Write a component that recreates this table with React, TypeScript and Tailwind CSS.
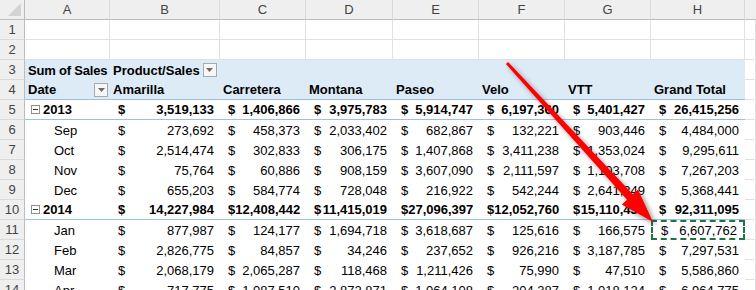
import React from "react";

const cols = ["A", "B", "C", "D", "E", "F", "G", "H"];
const heads = ["Amarilla", "Carretera", "Montana", "Paseo", "Velo", "VTT", "Grand Total"];

type Row = { label: string; year?: boolean; values: string[] };

const rows: Row[] = [
  { label: "2013", year: true, values: ["3,519,133", "1,406,866", "3,975,783", "5,914,747", "6,197,360", "5,401,427", "26,415,256"] },
  { label: "Sep", values: ["273,692", "458,373", "2,033,402", "682,867", "132,221", "903,446", "4,484,000"] },
  { label: "Oct", values: ["2,514,474", "302,833", "306,175", "1,407,868", "3,411,238", "1,353,024", "9,295,611"] },
  { label: "Nov", values: ["75,764", "60,886", "908,159", "3,607,090", "2,111,597", "1,103,708", "7,267,203"] },
  { label: "Dec", values: ["655,203", "584,774", "728,048", "216,922", "542,244", "2,641,249", "5,368,441"] },
  { label: "2014", year: true, values: ["14,227,984", "12,408,442", "11,415,019", "27,096,397", "12,052,760", "15,110,436", "92,311,095"] },
  { label: "Jan", values: ["877,987", "124,177", "1,694,718", "3,618,687", "125,616", "166,575", "6,607,762"] },
  { label: "Feb", values: ["2,826,775", "84,857", "34,246", "237,652", "926,216", "3,187,785", "7,297,531"] },
  { label: "Mar", values: ["2,068,179", "2,065,287", "118,468", "1,211,426", "75,990", "47,510", "5,586,860"] },
  { label: "Apr", values: ["717,775", "1,087,510", "2,872,871", "1,064,108", "204,387", "1,018,124", "6,964,775"] },
];

function RowNum({ n }: { n: number }) {
  return (
    <div className="flex items-center justify-center bg-[#efefef] border-b border-b-[#dadada] border-r border-r-[#bcbcbc] text-[#444]">
      {n}
    </div>
  );
}

// plain gridline cell (rows 1-2, and column I)
function Grid() {
  return <div className="bg-white border-b border-r border-[#e1e1e1]" />;
}

function FilterBtn() {
  return (
    <span className="w-[14px] h-[14px] border border-[#a9a9a9] bg-[#f7f7f7] flex items-center justify-center">
      <svg width="7" height="4" viewBox="0 0 7 4">
        <path d="M0 0H7L3.5 4Z" fill="#6b6b6b" />
      </svg>
    </span>
  );
}

function Collapse() {
  return (
    <span className="w-[9px] h-[9px] border border-[#8f8f8f] bg-white flex items-center justify-center mr-[3px]">
      <span className="w-[5px] h-px bg-[#333]" />
    </span>
  );
}

export default function App() {
  return (
    <div
      className="relative w-[756px] h-[290px] overflow-hidden bg-white text-[13px] text-black"
      style={{ fontFamily: '"Liberation Sans", Arial, sans-serif' }}
    >
      <div className="grid grid-cols-[25px_85px_110px_86px_87px_86px_86px_86px_94px_11px] auto-rows-[20px] leading-none">
        {/* column header */}
        <div className="bg-[#efefef] border-b border-r border-[#bcbcbc] flex items-end justify-end p-[3px]">
          <svg width="13" height="13" viewBox="0 0 13 13">
            <path d="M13 0V13H0Z" fill="#d3d3d3" />
          </svg>
        </div>
        {cols.map((c) => (
          <div key={c} className="bg-[#efefef] border-b border-b-[#bcbcbc] border-r border-r-[#dadada] flex items-center justify-center text-[#444]">
            {c}
          </div>
        ))}
        <div className="bg-[#efefef] border-b border-b-[#bcbcbc]" />

        {/* rows 1-2 */}
        {[1, 2].map((n) => (
          <React.Fragment key={n}>
            <RowNum n={n} />
            {cols.map((c) => <Grid key={c} />)}
            <Grid />
          </React.Fragment>
        ))}

        {/* row 3 */}
        <RowNum n={3} />
        <div className="bg-[#ddebf7] flex items-center pl-[3px] font-bold whitespace-nowrap tracking-[-0.2px]">Sum of Sales</div>
        <div className="bg-[#ddebf7] flex items-center pl-[3px] font-bold whitespace-nowrap gap-[3px]">
          Product/Sales <FilterBtn />
        </div>
        {heads.slice(1).map((h) => <div key={h} className="bg-[#ddebf7]" />)}
        <Grid />

        {/* row 4 */}
        <RowNum n={4} />
        <div className="bg-[#ddebf7] border-b border-[#9bc2e6] flex items-center justify-between pl-[3px] pr-[2px] font-bold">
          Date <FilterBtn />
        </div>
        {heads.map((h) => (
          <div key={h} className="bg-[#ddebf7] border-b border-[#9bc2e6] flex items-center pl-[3px] font-bold whitespace-nowrap">
            {h}
          </div>
        ))}
        <Grid />

        {/* pivot body */}
        {rows.map((r, i) => {
          const line = r.year ? "border-b border-[#9bc2e6]" : "";
          return (
            <React.Fragment key={r.label}>
              <RowNum n={i + 5} />
              <div className={`flex items-center ${line} ${r.year ? "pl-[6px] font-bold" : "pl-[29px]"}`}>
                {r.year && <Collapse />}
                {r.label}
              </div>
              {r.values.map((v, j) => {
                const copied = r.label === "Jan" && j === 6;
                return (
                  <div
                    key={j}
                    className={`flex items-center justify-between whitespace-nowrap pl-[8px] pr-[6px] ${line} ${r.year ? "font-bold" : ""} ${copied ? "border-2 border-dashed border-[#217346] pl-[6px] pr-[5px]" : ""}`}
                  >
                    <span>$</span>
                    <span>{v}</span>
                  </div>
                );
              })}
              <Grid />
            </React.Fragment>
          );
        })}
      </div>

      {/* red callout arrow */}
      <svg className="absolute left-0 top-0 pointer-events-none" width="756" height="290" viewBox="0 0 756 290">
        <defs>
          <filter id="sh" x="-20%" y="-20%" width="140%" height="140%">
            <feDropShadow dx="3" dy="3" stdDeviation="2.5" floodColor="#000" floodOpacity="0.4" />
          </filter>
        </defs>
        <polygon
          points="508.1,62 632.8,194.3 638,189.5 653,222 621.8,204.5 627,199.7 505.9,64"
          fill="#ff0000"
          filter="url(#sh)"
        />
      </svg>
    </div>
  );
}
